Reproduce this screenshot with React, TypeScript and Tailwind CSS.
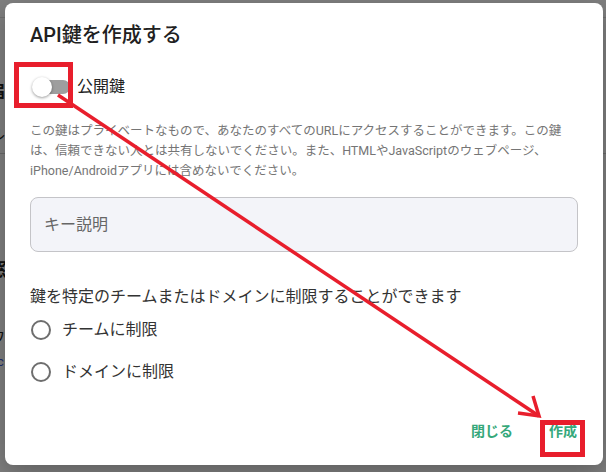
const font = { fontFamily: 'Roboto, "Noto Sans CJK JP", sans-serif' };

function Toggle() {
  return (
    <div className="relative h-5 w-[38px] shrink-0">
      <div className="absolute left-[4px] top-[3px] h-[14px] w-[34px] rounded-full bg-[#9e9e9e]" />
      <div className="absolute left-0 top-0 h-5 w-5 rounded-full bg-white shadow-[0_1px_3px_rgba(0,0,0,0.4)]" />
    </div>
  );
}

function Radio({ label }: { label: string }) {
  return (
    <label className="flex h-6 items-center gap-[11px] text-[16px] text-[#333]">
      <span className="ml-[1px] h-5 w-5 rounded-full border-2 border-[#6e6e6e]" />
      {label}
    </label>
  );
}

// red callouts drawn on top of the dialog
function Callout() {
  return (
    <svg className="pointer-events-none absolute inset-0" width="606" height="472" viewBox="0 0 606 472">
      <g stroke="#e81e2c" fill="none">
        <line x1="58" y1="95" x2="539" y2="416" strokeWidth="3.5" />
        <polyline points="533,396 539,416 518,413" strokeWidth="3.5" strokeLinejoin="miter" />
        <rect x="16.5" y="64.5" width="54" height="41" strokeWidth="5" />
        <rect x="542.5" y="422.5" width="40" height="32" strokeWidth="5" />
      </g>
    </svg>
  );
}

export default function App() {
  return (
    <div className="relative h-[472px] w-[606px] overflow-hidden bg-white" style={font}>
      {/* page underneath the modal */}
      <div className="flex flex-col text-[16px] text-[#222]">
        <div className="mt-[17px] h-px w-full bg-[#e0e0e0]" />
        <span className="ml-[-11px] mt-[62px] font-bold">届</span>
        <span className="ml-[-9px] mt-[20px] text-[14px]">ル</span>
        <div className="mt-[8px] h-px w-full bg-[#d0d0d0]" />
        <span className="ml-[-11px] mt-[102px] text-[18px] font-bold">窓</span>
        <span className="ml-[-9px] mt-[44px] text-[14px]">ワ</span>
        <span className="ml-[-3px] mt-[4px] text-[13px] text-[#3b5bdb]">c</span>
      </div>

      <div className="absolute inset-0 bg-black/50" />

      <div className="absolute left-[5px] top-[3px] flex h-[462px] w-[598px] flex-col rounded-lg bg-white px-[25px] shadow-[0_8px_24px_rgba(0,0,0,0.25)]">
        <h2 className="mt-[20px] text-[20px] font-medium leading-6 text-[#212121]">API鍵を作成する</h2>

        <div className="mt-[30px] flex h-5 items-center gap-[7px] pl-[2px]">
          <Toggle />
          <span className="text-[16px] text-[#222]">公開鍵</span>
        </div>

        <p className="mt-[24px] text-[12.5px] leading-5 text-[#757575]">
          この鍵はプライベートなもので、あなたのすべてのURLにアクセスすることができます。この鍵は、信頼できない人とは共有しないでください。また、HTMLやJavaScriptのウェブページ、iPhone/Androidアプリには含めないでください。
        </p>

        <div className="mt-[16px] flex h-[55px] items-center rounded-lg border border-[#c4c4c8] bg-[#f3f4f9] px-[13px] text-[16px] text-[#666]">
          キー説明
        </div>

        <p className="mt-[33px] text-[16px] leading-6 text-[#333]">鍵を特定のチームまたはドメインに制限することができます</p>

        <div className="mt-[9px] flex flex-col gap-[18px]">
          <Radio label="チームに制限" />
          <Radio label="ドメインに制限" />
        </div>

        <div className="mt-auto mb-[16px] flex items-center justify-end gap-[36px] pr-[1px] text-[14px] font-semibold text-[#35a87a]">
          <button className="h-9">閉じる</button>
          <button className="h-9">作成</button>
        </div>
      </div>

      <Callout />
    </div>
  );
}
